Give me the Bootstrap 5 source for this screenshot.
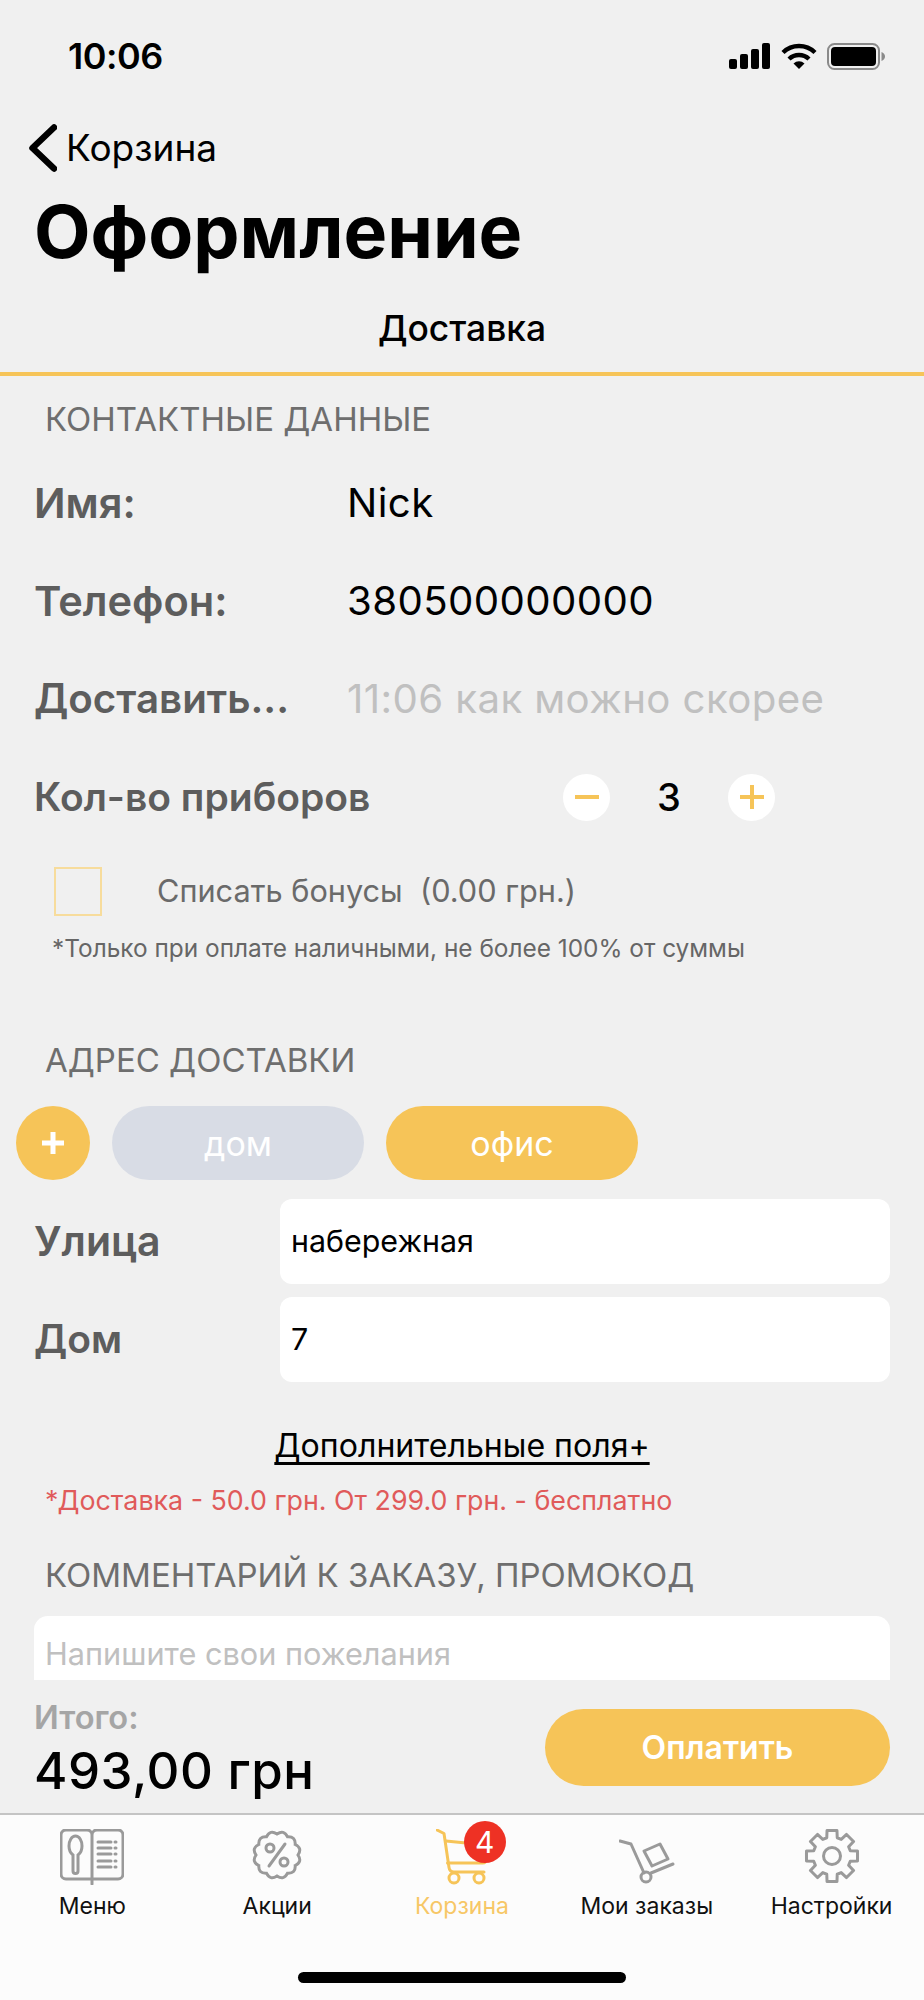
<!doctype html>
<html lang="ru">
<head>
<meta charset="utf-8">
<meta name="viewport" content="width=device-width, initial-scale=1">
<link href="https://cdn.jsdelivr.net/npm/bootstrap@5.3.0/dist/css/bootstrap.min.css" rel="stylesheet">
<style>
body{margin:0;background:#f0f0f0;font-family:Inter,"Noto Sans",sans-serif;color:#000}
.phone{width:924px;height:2000px;background:#f0f0f0;overflow:hidden}
.status-row{height:112px;padding:0 39px 0 68px}
.clock{font-size:36px;font-weight:600;letter-spacing:-.5px}
.status-icons{gap:10px}
.back-row{height:72px;padding-left:28px;gap:9px}
.back-text{font-size:37px}
.page-title{height:96px;padding-left:34px;font-size:73.4px;font-weight:700;margin:0;line-height:96px}
.step-title{height:96px;padding-top:6px;font-size:35.4px;font-weight:500;border-bottom:4px solid #f6c458}
.scroller{height:1304px;overflow:hidden}
.sect{height:50px;padding-left:45px;font-size:33px;color:#6e6e6e;line-height:50px}
.sect-first{margin-top:18px;margin-bottom:10px}
.sect-addr{margin-top:67px}
.sect-comment{margin-top:30px}
.field-row{height:98px;padding-left:34px}
.field-label{width:313px;font-size:41px;font-weight:600;color:#5d5d5d;white-space:nowrap}
.label-wide{font-size:41.6px}
.label-trim{font-size:40.3px}
.field-value{font-size:40.2px;letter-spacing:.4px}
.muted-value{color:#c0c0c0}
.count-label{width:529px;font-size:39px}
.step-btn{width:47px;height:47px;background:#fff;border-radius:50%;padding:0}
.count{width:106px;text-align:center;font-size:38px;font-weight:500;margin:0 6px}
.bonus-row{margin-top:21px;padding-left:54px;height:49px}
.bonus-check{width:48px;height:49px;border:2px solid #f7dc9c;flex:none}
.bonus-text{margin-left:55px;font-size:30.7px;color:#6a6a6a;white-space:pre}
.bonus-note{margin-top:12px;height:40px;padding-left:52px;font-size:24.4px;color:#666}
.pills{margin-top:21px;padding-left:16px;gap:22px}
.pill-add{width:74px;height:74px;background:#f6c458;border-radius:50%;padding:0}
.pill-addr{width:252px;height:74px;border-radius:37px;border:0;color:#fff;font-size:34px;padding:0}
.pill-off{background:#d8dce5}
.pill-on{background:#f6c458}
.addr-row{padding:0 34px 0 34px}
.addr-label{width:246px;font-size:41px;font-weight:600;color:#5d5d5d}
.addr-short{font-size:39px}
.addr-input{flex:1;height:85px;background:#fff;border:0;border-radius:12px;padding:0 11px;font-size:30.4px;color:#000}
.addr-a{margin-top:19px}
.addr-b{margin-top:13px}
.more-link{margin-top:39px;height:50px;font-size:32.1px;color:#000;text-decoration:underline;text-underline-offset:5px}
.red-note{margin-top:9px;height:40px;padding-left:45px;font-size:26.8px;color:#e05a5a}
.comment-box{margin:16px 34px 0;height:120px;background:#fff;border-radius:14px 14px 0 0;padding:19px 11px;font-size:30.7px;color:#c0c0c0;line-height:38px}
.total-bar{height:133px;padding:20px 34px 0 34px}
.total-label{height:34px;font-size:32.6px;font-weight:600;color:#a5a5a5;line-height:34px}
.total-value{height:74px;font-size:51px;font-weight:500;line-height:74px;letter-spacing:.5px}
.pay-btn{width:345px;height:77px;margin-top:9px;background:#f6c458;color:#fff;border:0;border-radius:39px;font-size:32px;font-weight:600;padding:0}
.tabbar{height:187px;background:#fcfcfc;border-top:2px solid #c4c4c4}
.tab-item{width:20%;height:92px;padding-top:14px;position:relative;font-size:23px;color:#111}
.tab-icon{height:60px}
.tab-active{color:#f7c766}
.tab-count{position:absolute;top:6px;left:94px;width:42px;height:42px;background:#ee3124;color:#fff;border-radius:50%;font-size:30px;font-weight:400;padding:0;line-height:42px}
.home-bar{width:328px;height:11px;background:#000;border-radius:6px;margin:65px auto 0}
</style>
</head>
<body>
<div class="phone d-flex flex-column">
  <div class="status-row d-flex align-items-center justify-content-between">
    <span class="clock">10:06</span>
    <div class="status-icons d-flex align-items-center">
      <svg width="42" height="26" viewBox="0 0 42 26"><rect x="0" y="16" width="8" height="10" rx="2"/><rect x="11" y="11" width="8" height="15" rx="2"/><rect x="22" y="6" width="8" height="20" rx="2"/><rect x="33" y="0" width="8" height="26" rx="2"/></svg>
      <svg width="36" height="26" viewBox="0 0 36 26" fill="none" stroke="#000" stroke-width="4.4"><path d="M2 9.500a23 23 0 0 1 32 0"/><path d="M8 16a14.500 14.500 0 0 1 20 0"/><path d="M12.500 20.500 18 26l5.500-5.500a8 8 0 0 0-11 0z" fill="#000" stroke="none"/></svg>
      <svg width="58" height="27" viewBox="0 0 58 27"><rect x="1" y="1" width="51" height="25" rx="6.500" fill="none" stroke="#8a8a8a" stroke-width="2"/><rect x="4" y="4" width="45" height="19" rx="4"/><path d="M54.500 9c2 .5 3.500 2.500 3.500 4.500s-1.500 4-3.500 4.500z" fill="#8a8a8a"/></svg>
    </div>
  </div>
  <div class="back-row d-flex align-items-center">
    <svg width="29" height="48" viewBox="0 0 29 48" fill="none" stroke="#000" stroke-width="6.500" stroke-linecap="round" stroke-linejoin="round"><path d="M26 3.500 4.500 24 26 44.500"/></svg>
    <span class="back-text">Корзина</span>
  </div>
  <h1 class="page-title">Оформление</h1>
  <div class="step-title d-flex align-items-center justify-content-center">Доставка</div>
  <div class="scroller">
    <div class="sect sect-first">КОНТАКТНЫЕ ДАННЫЕ</div>
    <div class="field-row d-flex align-items-center"><span class="field-label label-wide">Имя:</span><span class="field-value">Nick</span></div>
    <div class="field-row d-flex align-items-center"><span class="field-label label-wide">Телефон:</span><span class="field-value">380500000000</span></div>
    <div class="field-row d-flex align-items-center"><span class="field-label label-trim">Доставить...</span><span class="field-value muted-value">11:06 как можно скорее</span></div>
    <div class="field-row d-flex align-items-center">
      <span class="field-label count-label">Кол-во приборов</span>
      <button class="step-btn btn d-flex align-items-center justify-content-center" type="button" aria-label="минус"><svg width="24" height="24" viewBox="0 0 24 24"><rect x="0" y="10" width="24" height="4" fill="#f6c458"/></svg></button>
      <span class="count">3</span>
      <button class="step-btn btn d-flex align-items-center justify-content-center" type="button" aria-label="плюс"><svg width="24" height="24" viewBox="0 0 24 24"><path d="M10 0h4v10h10v4H14v10h-4V14H0v-4h10z" fill="#f6c458"/></svg></button>
    </div>
    <div class="bonus-row d-flex align-items-center"><span class="bonus-check"></span><span class="bonus-text">Списать бонусы  (0.00 грн.)</span></div>
    <div class="bonus-note d-flex align-items-center">*Только при оплате наличными, не более 100% от суммы</div>
    <div class="sect sect-addr">АДРЕС ДОСТАВКИ</div>
    <div class="pills d-flex">
      <button class="pill-add btn d-flex align-items-center justify-content-center" type="button" aria-label="добавить"><svg width="22" height="22" viewBox="0 0 22 22"><path d="M8.500 0h5v8.500H22v5h-8.500V22h-5v-8.500H0v-5h8.500z" fill="#fff"/></svg></button>
      <button class="pill-addr pill-off btn" type="button">дом</button>
      <button class="pill-addr pill-on btn" type="button">офис</button>
    </div>
    <div class="addr-row addr-a d-flex align-items-center"><span class="addr-label">Улица</span><div class="addr-input d-flex align-items-center">набережная</div></div>
    <div class="addr-row addr-b d-flex align-items-center"><span class="addr-label addr-short">Дом</span><div class="addr-input d-flex align-items-center">7</div></div>
    <div class="more-link d-flex align-items-center justify-content-center">Дополнительные поля+</div>
    <div class="red-note d-flex align-items-center">*Доставка - 50.0 грн. От 299.0 грн. - бесплатно</div>
    <div class="sect sect-comment">КОММЕНТАРИЙ К ЗАКАЗУ, ПРОМОКОД</div>
    <div class="comment-box">Напишите свои пожелания</div>
  </div>
  <div class="total-bar d-flex justify-content-between">
    <div>
      <div class="total-label">Итого:</div>
      <div class="total-value">493,00 грн</div>
    </div>
    <button class="pay-btn btn" type="button">Оплатить</button>
  </div>
  <div class="tabbar">
    <div class="d-flex">
      <div class="tab-item text-center">
        <div class="tab-icon"><svg width="64" height="56" viewBox="0 0 64 56" fill="none" stroke="#9a9a9a" stroke-width="3" stroke-linecap="round"><path d="M32 50H6a5 5 0 0 1-5-5V6a5 5 0 0 1 5-5h21a5 5 0 0 1 5 5zM32 50h26a5 5 0 0 0 5-5V6a5 5 0 0 0-5-5H37a5 5 0 0 0-5 5zM32 50v5"/><path d="M15.500 7c-3.800 0-6.500 4.500-6.500 10 0 4.500 2 7.500 4 9v16a2.500 2.500 0 0 0 5 0V26c2-1.500 4-4.500 4-9 0-5.500-2.700-10-6.500-10z"/><path d="M38 13h13M38 19h13M38 25h13M38 32h13M38 38h13M55 13h1M55 19h1M55 25h1M55 32h1M55 38h1"/></svg></div>
        <div>Меню</div>
      </div>
      <div class="tab-item text-center">
        <div class="tab-icon"><svg width="52" height="52" viewBox="-1 0 52 52" fill="none" stroke="#9a9a9a" stroke-width="3" stroke-linecap="round"><path d="M46 26Q50.600 32.900 43.200 36.500 43.700 44.700 35.500 44.200 31.900 51.600 25 47 18.100 51.600 14.500 44.200 6.300 44.700 6.800 36.500-.6 32.900 4 26-.6 19.100 6.800 15.500 6.300 7.300 14.500 7.800 18.100 .4 25 5 31.900 .4 35.500 7.800 43.700 7.300 43.200 15.500 50.600 19.100 46 26z"/><circle cx="18" cy="19" r="4"/><circle cx="32" cy="33" r="4"/><path d="M33 15 17 37"/></svg></div>
        <div>Акции</div>
      </div>
      <div class="tab-item tab-active text-center">
        <div class="tab-icon"><svg width="52" height="56" viewBox="0 0 52 56" fill="none" stroke="#f6c458" stroke-width="3" stroke-linecap="round" stroke-linejoin="round"><path d="M1 1l7 3.500 5 34c.4 3 2 4.500 5 4.500h30"/><path d="M10 12l40 4v14c0 2.500-1 4-3.500 4H11.500"/><circle cx="18" cy="49" r="5"/><circle cx="43" cy="49" r="5"/></svg></div>
        <div>Корзина</div>
        <span class="tab-count badge">4</span>
      </div>
      <div class="tab-item text-center">
        <div class="tab-icon"><svg width="56" height="60" viewBox="0 -10 56 60" fill="none" stroke="#9a9a9a" stroke-width="3" stroke-linecap="round" stroke-linejoin="round"><path d="M1 2l11 3 13 29"/><circle cx="27" cy="38" r="5"/><path d="M32 34l22-9"/><path d="M25 12l16-7 8 15-16 7z"/></svg></div>
        <div>Мои заказы</div>
      </div>
      <div class="tab-item text-center">
        <div class="tab-icon"><svg width="56" height="54" viewBox="0 0 56 54" fill="none" stroke="#9a9a9a" stroke-width="3" stroke-linejoin="round"><path d="M22.760 8.740 23.040 1.480H32.960L33.240 8.740 37.210 10.380 42.540 5.440 49.560 12.460 44.620 17.790 46.260 21.760 53.520 22.040V31.960L46.260 32.240 44.620 36.210 49.560 41.540 42.540 48.560 37.210 43.620 33.240 45.260 32.960 52.520H23.040L22.760 45.260 18.790 43.620 13.460 48.560 6.440 41.540 11.380 36.210 9.740 32.240 2.480 31.960V22.040L9.740 21.760 11.380 17.790 6.440 12.460 13.460 5.440 18.790 10.380z"/><circle cx="28" cy="27" r="8.500"/></svg></div>
        <div>Настройки</div>
      </div>
    </div>
    <div class="home-bar"></div>
  </div>
</div>
<script src="https://cdn.jsdelivr.net/npm/bootstrap@5.3.0/dist/js/bootstrap.bundle.min.js"></script>
</body>
</html>
